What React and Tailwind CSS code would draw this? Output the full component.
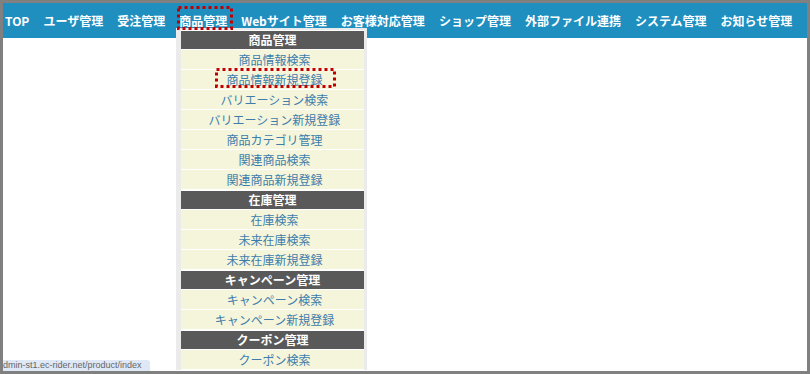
import React from 'react';

const navItems = [
  'TOP',
  'ユーザ管理',
  '受注管理',
  '商品管理',
  'Webサイト管理',
  'お客様対応管理',
  'ショップ管理',
  '外部ファイル連携',
  'システム管理',
  'お知らせ管理',
];

const menu = [
  { head: '商品管理', items: ['商品情報検索', '商品情報新規登録', 'バリエーション検索', 'バリエーション新規登録', '商品カテゴリ管理', '関連商品検索', '関連商品新規登録'] },
  { head: '在庫管理', items: ['在庫検索', '未来在庫検索', '未来在庫新規登録'] },
  { head: 'キャンペーン管理', items: ['キャンペーン検索', 'キャンペーン新規登録'] },
  { head: 'クーポン管理', items: ['クーポン検索'] },
];

function DottedBox({ className, w, h }) {
  return (
    <svg className={className} width={w} height={h}>
      <rect x="1.5" y="1.5" width={w - 3} height={h - 3} fill="none" stroke="#c00000" strokeWidth="3" strokeDasharray="3 3" />
    </svg>
  );
}

export default function App() {
  return (
    <div className="relative w-[810px] h-[374px] overflow-hidden border-[3px] border-[#808080] bg-white font-['Noto_Sans_CJK_JP',sans-serif]">
      <nav className="flex h-[35px] items-center gap-[14px] bg-[#1f8fc0] pl-[2px] text-[12px] font-bold leading-none text-white">
        {navItems.map((n) => (
          <span key={n} className="whitespace-nowrap">{n}</span>
        ))}
      </nav>

      {/* dropdown menu under 商品管理 */}
      <div className="absolute left-[173px] top-[25px] w-[191px] bg-[#ebebeb] pl-[5px] pr-[3px] pt-[2px]">
        {menu.map((g) => (
          <div key={g.head}>
            <div className="flex h-[20px] items-center justify-center border-y border-white bg-[#595959] text-[12px] font-bold leading-none text-white">
              {g.head}
            </div>
            {g.items.map((it) => (
              <div key={it} className="flex h-[20px] items-center justify-center border-b border-white bg-[#f5f5dc] pl-[4px] text-[12px] leading-none text-[#3d7dab]">
                {it}
              </div>
            ))}
          </div>
        ))}
      </div>

      <DottedBox className="absolute left-[174px] top-[3px]" w={56} h={24} />
      <DottedBox className="absolute left-[212px] top-[65px]" w={121} h={20} />

      <div className="absolute bottom-0 left-0 flex h-[11px] w-[147px] items-center whitespace-nowrap rounded-tr-[3px] bg-[#dfe8f6] font-['Liberation_Sans',sans-serif] text-[9px] leading-none text-[#666]">
        dmin-st1.ec-rider.net/product/index
      </div>
    </div>
  );
}
